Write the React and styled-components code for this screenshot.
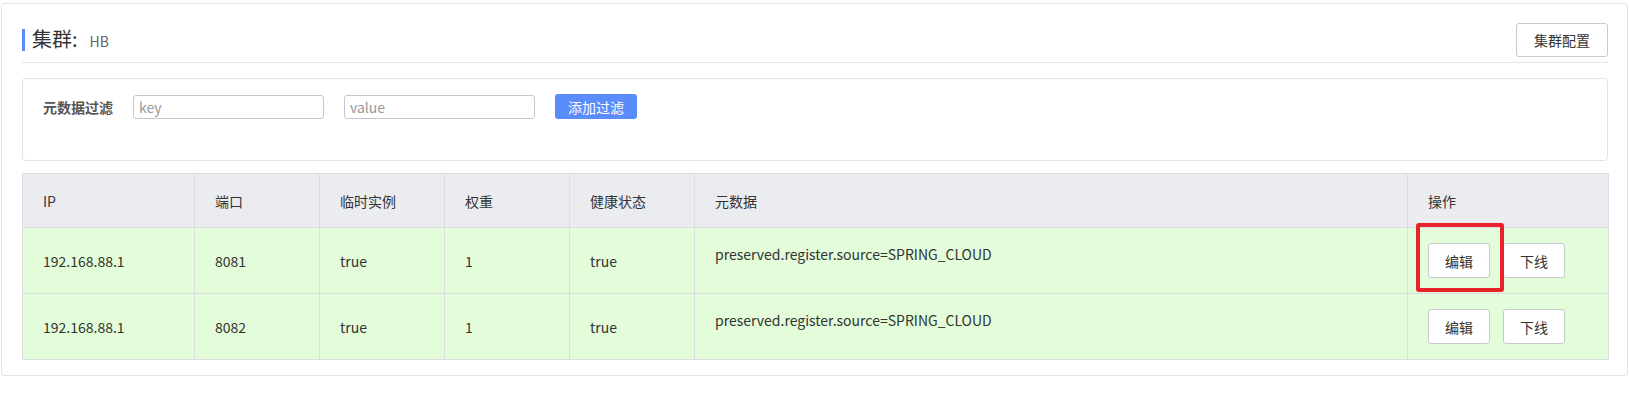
import React from "react";
import styled, { createGlobalStyle } from "styled-components";

const GlobalStyle = createGlobalStyle`
  body {
    margin: 0;
    background: #fff;
    font-family: "Noto Sans CJK SC", "Noto Sans", sans-serif;
    color: #333;
  }
`;

const instances = [
  { ip: "192.168.88.1", port: 8081, ephemeral: "true", weight: 1, healthy: "true", meta: "preserved.register.source=SPRING_CLOUD", marked: true },
  { ip: "192.168.88.1", port: 8082, ephemeral: "true", weight: 1, healthy: "true", meta: "preserved.register.source=SPRING_CLOUD" },
];

const columns = [
  { title: "IP", width: 172 },
  { title: "端口", width: 125 },
  { title: "临时实例", width: 125 },
  { title: "权重", width: 125 },
  { title: "健康状态", width: 125 },
  { title: "元数据", width: 713 },
  { title: "操作", width: 201 },
];

const App = () => {
  return (
    <>
      <GlobalStyle />
      <Card>
        <Header>
          <Title>
            集群:<small>HB</small>
          </Title>
          <Button>集群配置</Button>
        </Header>

        <FilterBox>
          <Label>元数据过滤</Label>
          <Input placeholder="key" />
          <Input placeholder="value" />
          <PrimaryButton>添加过滤</PrimaryButton>
        </FilterBox>

        <Table>
          <colgroup>
            {columns.map((c) => (
              <col key={c.title} style={{ width: c.width }} />
            ))}
          </colgroup>
          <thead>
            <tr>
              {columns.map((c) => (
                <Th key={c.title}>{c.title}</Th>
              ))}
            </tr>
          </thead>
          <tbody>
            {instances.map((item) => (
              <tr key={item.port}>
                <Td>{item.ip}</Td>
                <Td>{item.port}</Td>
                <Td>{item.ephemeral}</Td>
                <Td>{item.weight}</Td>
                <Td>{item.healthy}</Td>
                <Td $top>{item.meta}</Td>
                <Td>
                  <Actions>
                    <Marked $on={item.marked}>
                      <Button $small>编辑</Button>
                    </Marked>
                    <Button $small>下线</Button>
                  </Actions>
                </Td>
              </tr>
            ))}
          </tbody>
        </Table>
      </Card>
    </>
  );
};

const Card = styled.div`
  margin: 3px 1px 0 1px;
  padding: 0 19px 15px 20px;
  border: 1px solid #e3e3e6;
  border-radius: 3px;
`;

const Header = styled.div`
  display: flex;
  justify-content: space-between;
  align-items: center;
  padding: 19px 0 5px;
  border-bottom: 1px solid #e6e6e9;
`;

const Title = styled.h2`
  margin: 0;
  padding-left: 7px;
  border-left: 3px solid #5b8cff;
  font-size: 20px;
  line-height: 20px;
  font-weight: normal;
  color: #333;
  small {
    font-size: 14px;
    color: #666;
    margin-left: 12px;
  }
`;

const Button = styled.button`
  height: ${(p) => (p.$small ? "35px" : "34px")};
  padding: 0 ${(p) => (p.$small ? "16px" : "17px")};
  background: #fff;
  border: 1px solid #c9cad0;
  border-radius: 3px;
  font-family: inherit;
  font-size: 14px;
  color: #333;
  cursor: pointer;
`;

const FilterBox = styled.div`
  display: flex;
  align-items: center;
  margin-top: 15px;
  padding: 15px 20px 41px;
  border: 1px solid #e3e3e6;
  border-radius: 4px;
`;

const Label = styled.span`
  font-size: 14px;
  font-weight: bold;
  color: #555;
  margin-right: 20px;
`;

const Input = styled.input`
  box-sizing: border-box;
  width: 191px;
  height: 24px;
  margin-right: 20px;
  padding: 0 5px;
  border: 1px solid #c6c7cf;
  border-radius: 3px;
  font-family: inherit;
  font-size: 14px;
  color: #333;
  outline: none;
  &::placeholder {
    color: #999;
  }
`;

const PrimaryButton = styled.button`
  height: 25px;
  width: 82px;
  padding: 0;
  background: #5b8cfb;
  border: none;
  border-radius: 3px;
  color: #fff;
  font-family: inherit;
  font-size: 14px;
  cursor: pointer;
`;

const Table = styled.table`
  width: 100%;
  margin-top: 12px;
  table-layout: fixed;
  border-collapse: collapse;
  border: 1px solid #dcdde2;
  font-size: 14px;
`;

const Th = styled.th`
  height: 53px;
  padding: 0 20px;
  background: #ebecf0;
  border: 1px solid #dcdde2;
  font-weight: normal;
  text-align: left;
  color: #333;
`;

const Td = styled.td`
  height: ${(p) => (p.$top ? "49px" : "65px")};
  padding: ${(p) => (p.$top ? "16px 20px 0" : "0 20px")};
  vertical-align: ${(p) => (p.$top ? "top" : "middle")};
  background: #e3fcd9;
  border: 1px solid #dcdde2;
  line-height: 20px;
  color: #333;
`;

const Actions = styled.div`
  display: flex;
  gap: 13px;
`;

const Marked = styled.span`
  position: relative;
  display: inline-flex;
  &::after {
    content: "";
    display: ${(p) => (p.$on ? "block" : "none")};
    position: absolute;
    top: -20px;
    left: -12px;
    right: -14px;
    bottom: -14px;
    border: 4px solid #e8212a;
    border-radius: 3px;
    pointer-events: none;
  }
`;

export default App;
